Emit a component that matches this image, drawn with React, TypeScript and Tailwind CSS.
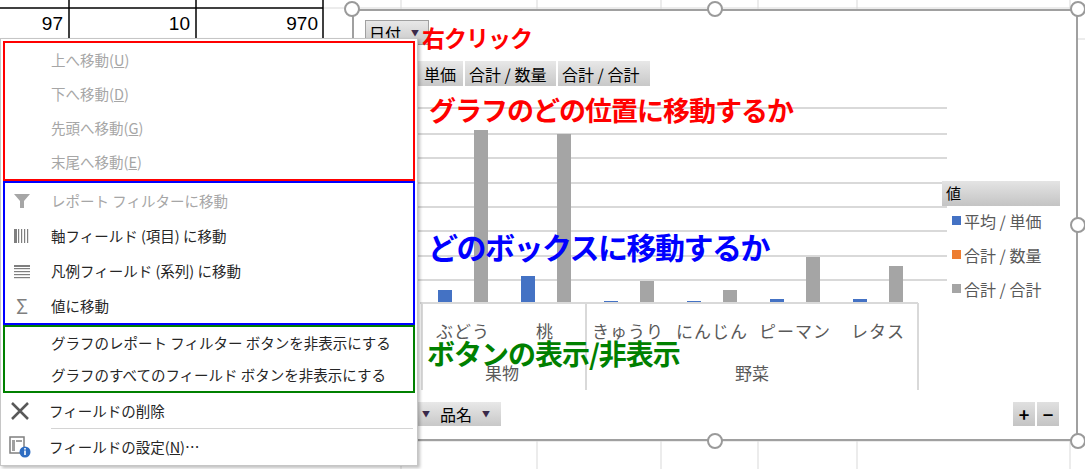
import React from "react";

const JP = { fontFamily: '"Noto Sans CJK JP", "Noto Sans", sans-serif' };

const bars: [number, number, string][] = [
  [438, 290, "#4472c4"], [474, 130, "#a5a5a5"],
  [521, 276, "#4472c4"], [557, 134, "#a5a5a5"],
  [604, 301, "#4472c4"], [640, 281, "#a5a5a5"],
  [687, 301, "#4472c4"], [723, 290, "#a5a5a5"],
  [770, 299, "#4472c4"], [806, 257, "#a5a5a5"],
  [853, 299, "#4472c4"], [889, 266, "#a5a5a5"],
];
const grid = [108, 134, 158, 183, 207, 231, 256, 280];
const cats: [string, number][] = [["ぶどう", 463], ["桃", 545], ["きゅうり", 628], ["にんじん", 712], ["ピーマン", 795], ["レタス", 878]];

function Handle({ x, y }: { x: number; y: number }) {
  return <div className="absolute w-[16px] h-[16px] rounded-full border-[2.5px] border-[#9a9a9a] bg-white" style={{ left: x - 8, top: y - 8 }} />;
}

function FieldBtn({ children, className }: { children: React.ReactNode; className: string }) {
  return (
    <div className={"absolute flex items-center bg-gradient-to-b from-[#e8e8e8] to-[#c8c8c8] text-[16px] text-black " + className}>
      {children}
    </div>
  );
}

const Arrow = () => <span className="text-[8px] text-[#3a2a4a] ml-[10px]">▼</span>;

function Item({ icon, text, disabled }: { icon?: React.ReactNode; text: React.ReactNode; disabled?: boolean }) {
  return (
    <div className={"flex items-center h-[35px] text-[14.5px] " + (disabled ? "text-[#a6a6a6]" : "text-[#262626]")}>
      <div className="w-[46px] flex justify-center pr-[12px]">{icon}</div>
      <div>{text}</div>
    </div>
  );
}

export default function App() {
  return (
    <div className="relative w-[1085px] h-[469px] bg-white overflow-hidden" style={JP}>
      <svg className="absolute left-0 top-0" width="1085" height="469">
        {[401, 537, 661, 758, 857, 1070].map((x) => (
          <line key={x} x1={x} y1={0} x2={x} y2={469} stroke="#d9d9d9" />
        ))}
        {[8, 39, 441].map((y) => (
          <line key={y} x1={323} y1={y} x2={1085} y2={y} stroke="#d9d9d9" />
        ))}
        <line x1={0} y1={8} x2={323} y2={8} stroke="#000" strokeWidth={1.5} />
        <line x1={0} y1={39} x2={323} y2={39} stroke="#000" strokeWidth={1.5} />
        {[69, 196, 323].map((x) => (
          <line key={x} x1={x} y1={0} x2={x} y2={40} stroke="#000" strokeWidth={1.5} />
        ))}
      </svg>
      <div className="absolute top-[10px] left-0 flex text-[19px] text-black" style={{ fontFamily: '"Liberation Sans", sans-serif' }}>
        <div className="w-[63px] text-right">97</div>
        <div className="w-[127px] text-right">10</div>
        <div className="w-[128px] text-right">970</div>
      </div>

      <div className="absolute left-[352px] top-[9px] w-[726px] h-[432px] bg-white border-[2px] border-[#a0a0a0]" />
      <svg className="absolute left-0 top-0" width="1085" height="469">
        {grid.map((y) => (
          <line key={y} x1={398} y1={y} x2={947} y2={y} stroke="#d9d9d9" strokeWidth={2} />
        ))}
        {bars.map(([x, t, c], i) => (
          <rect key={i} x={x} y={t} width={14} height={303 - t} fill={c} />
        ))}
        <line x1={420} y1={303} x2={918} y2={303} stroke="#d9d9d9" strokeWidth={2} />
        {[422, 586, 918].map((x) => (
          <line key={x} x1={x} y1={303} x2={x} y2={390} stroke="#d9d9d9" strokeWidth={2} />
        ))}
      </svg>
      {cats.map(([t, x]) => (
        <div key={t} className="absolute top-[318px] -translate-x-1/2 text-[17px] text-[#595959] tracking-[1px]" style={{ left: x }}>{t}</div>
      ))}
      <div className="absolute top-[360px] left-[485px] text-[17px] text-[#595959]">果物</div>
      <div className="absolute top-[360px] left-[735px] text-[17px] text-[#595959]">野菜</div>

      <FieldBtn className="left-[365px] top-[20px] w-[64px] h-[25px] px-[3px] border border-[#a0a0a0]">日付<Arrow /></FieldBtn>
      <FieldBtn className="left-[418px] top-[61px] h-[25px] gap-[2px] bg-none">
        <span className="bg-gradient-to-b from-[#e8e8e8] to-[#c8c8c8] h-full w-[45px] px-[6px] flex items-center">単価</span>
        <span className="bg-gradient-to-b from-[#e8e8e8] to-[#c8c8c8] h-full w-[91px] px-[4px] flex items-center">合計 / 数量</span>
        <span className="bg-gradient-to-b from-[#e8e8e8] to-[#c8c8c8] h-full w-[92px] px-[4px] flex items-center">合計 / 合計</span>
      </FieldBtn>
      <FieldBtn className="left-[418px] top-[402px] h-[24px] gap-[2px]">
        <span className="flex items-center h-full w-[16px] justify-center"><span className="text-[8px] text-[#3a2a4a]">▼</span></span>
        <span className="flex items-center h-full w-[65px] px-[4px] bg-gradient-to-b from-[#e8e8e8] to-[#c8c8c8]">品名<Arrow /></span>
      </FieldBtn>
      <FieldBtn className="left-[1013px] top-[402px] h-[24px] gap-[2px] text-[#777] font-bold text-[18px] bg-none">
        <span className="bg-gradient-to-b from-[#e0e0e0] to-[#c4c4c4] w-[22px] h-full flex items-center justify-center">+</span>
        <span className="bg-gradient-to-b from-[#e0e0e0] to-[#c4c4c4] w-[22px] h-full flex items-center justify-center">−</span>
      </FieldBtn>

      <div className="absolute left-[942px] top-[181px] w-[118px] h-[25px] bg-gradient-to-b from-[#e4e4e4] to-[#c4c4c4] text-[15px] text-black flex items-center px-[4px]">値</div>
      <div className="absolute left-[952px] top-[210px] flex flex-col gap-[13px] text-[16px] text-[#595959]">
        {[["#4472c4", "平均 / 単価"], ["#ed7d31", "合計 / 数量"], ["#a5a5a5", "合計 / 合計"]].map(([c, t]) => (
          <div key={t} className="flex items-center gap-[3px] h-[21px]">
            <span className="w-[9px] h-[9px]" style={{ background: c }} />
            {t}
          </div>
        ))}
      </div>

      <Handle x={352} y={9} />
      <Handle x={715} y={9} />
      <Handle x={1078} y={9} />
      <Handle x={1078} y={225} />
      <Handle x={715} y={441} />
      <Handle x={1078} y={441} />

      <div className="absolute left-[422px] top-[20px] text-[23px] font-bold text-[#ff0000] tracking-[-1px]">右クリック</div>
      <div className="absolute left-[429px] top-[90px] text-[27px] font-bold text-[#ff0000] tracking-[-1px]">グラフのどの位置に移動するか</div>
      <div className="absolute left-[428px] top-[224px] text-[30px] font-bold text-[#0000ff] tracking-[-1.5px]">どのボックスに移動するか</div>
      <div className="absolute left-[427px] top-[332px] text-[28px] font-bold text-[#008000] tracking-[-1px]">ボタンの表示/非表示</div>

      <div className="absolute left-0 top-[38px] w-[418px] h-[428px] bg-white border border-[#c6c6c6] shadow-[2px_2px_3px_rgba(0,0,0,0.25)] flex flex-col pt-[2px] px-[2px]">
        <div className="border-[2px] border-[#ff0000] h-[140px] flex flex-col justify-center">
          <Item disabled text={<>上へ移動(<u>U</u>)</>} />
          <Item disabled text={<>下へ移動(<u>D</u>)</>} />
          <Item disabled text={<>先頭へ移動(<u>G</u>)</>} />
          <Item disabled text={<>末尾へ移動(<u>E</u>)</>} />
        </div>
        <div className="border-[2px] border-[#0000ff] h-[144px] flex flex-col justify-center">
          <Item disabled icon={<svg width="18" height="18" viewBox="0 0 18 18"><path d="M1 2h16l-6 7v7h-4v-7z" fill="#a6a6a6" /></svg>} text="レポート フィルターに移動" />
          <Item icon={<svg width="18" height="18" viewBox="0 0 18 18">{[1, 5, 8, 11, 14].map((x, i) => <rect key={x} x={x} y={2} width={i === 0 ? 3 : 1.2} height={14} fill="#7f7f7f" />)}</svg>} text="軸フィールド (項目) に移動" />
          <Item icon={<svg width="18" height="18" viewBox="0 0 18 18">{[3, 6, 9, 12, 15].map((y, i) => <rect key={y} x={1} y={y} width={16} height={i === 0 ? 2 : 1.2} fill="#7f7f7f" />)}</svg>} text="凡例フィールド (系列) に移動" />
          <Item icon={<span className="text-[20px] text-[#7f7f7f] leading-none">Σ</span>} text="値に移動" />
        </div>
        <div className="border-[2px] border-[#008000] h-[68px] flex flex-col justify-center">
          <Item text="グラフのレポート フィルター ボタンを非表示にする" />
          <Item text="グラフのすべてのフィールド ボタンを非表示にする" />
        </div>
        <Item icon={<svg width="22" height="22" viewBox="0 0 22 22"><path d="M3 3L19 19M19 3L3 19" stroke="#595959" strokeWidth="2.5" /></svg>} text="フィールドの削除" />
        <div className="ml-[48px] mr-[2px] h-px bg-[#d4d4d4]" />
        <Item icon={<svg width="22" height="22" viewBox="0 0 22 22"><rect x="1" y="1" width="14" height="16" fill="none" stroke="#7f7f7f" strokeWidth="1.5" /><rect x="3" y="4" width="3" height="11" fill="#a0a0a0" /><rect x="7" y="4" width="6" height="2" fill="#a0a0a0" /><circle cx="16" cy="16" r="5.5" fill="#2e6dc2" /><rect x="15.2" y="14.5" width="1.6" height="4.5" fill="#fff" /><rect x="15.2" y="12" width="1.6" height="1.6" fill="#fff" /></svg>} text={<>フィールドの設定(<u>N</u>)…</>} />
      </div>
    </div>
  );
}
